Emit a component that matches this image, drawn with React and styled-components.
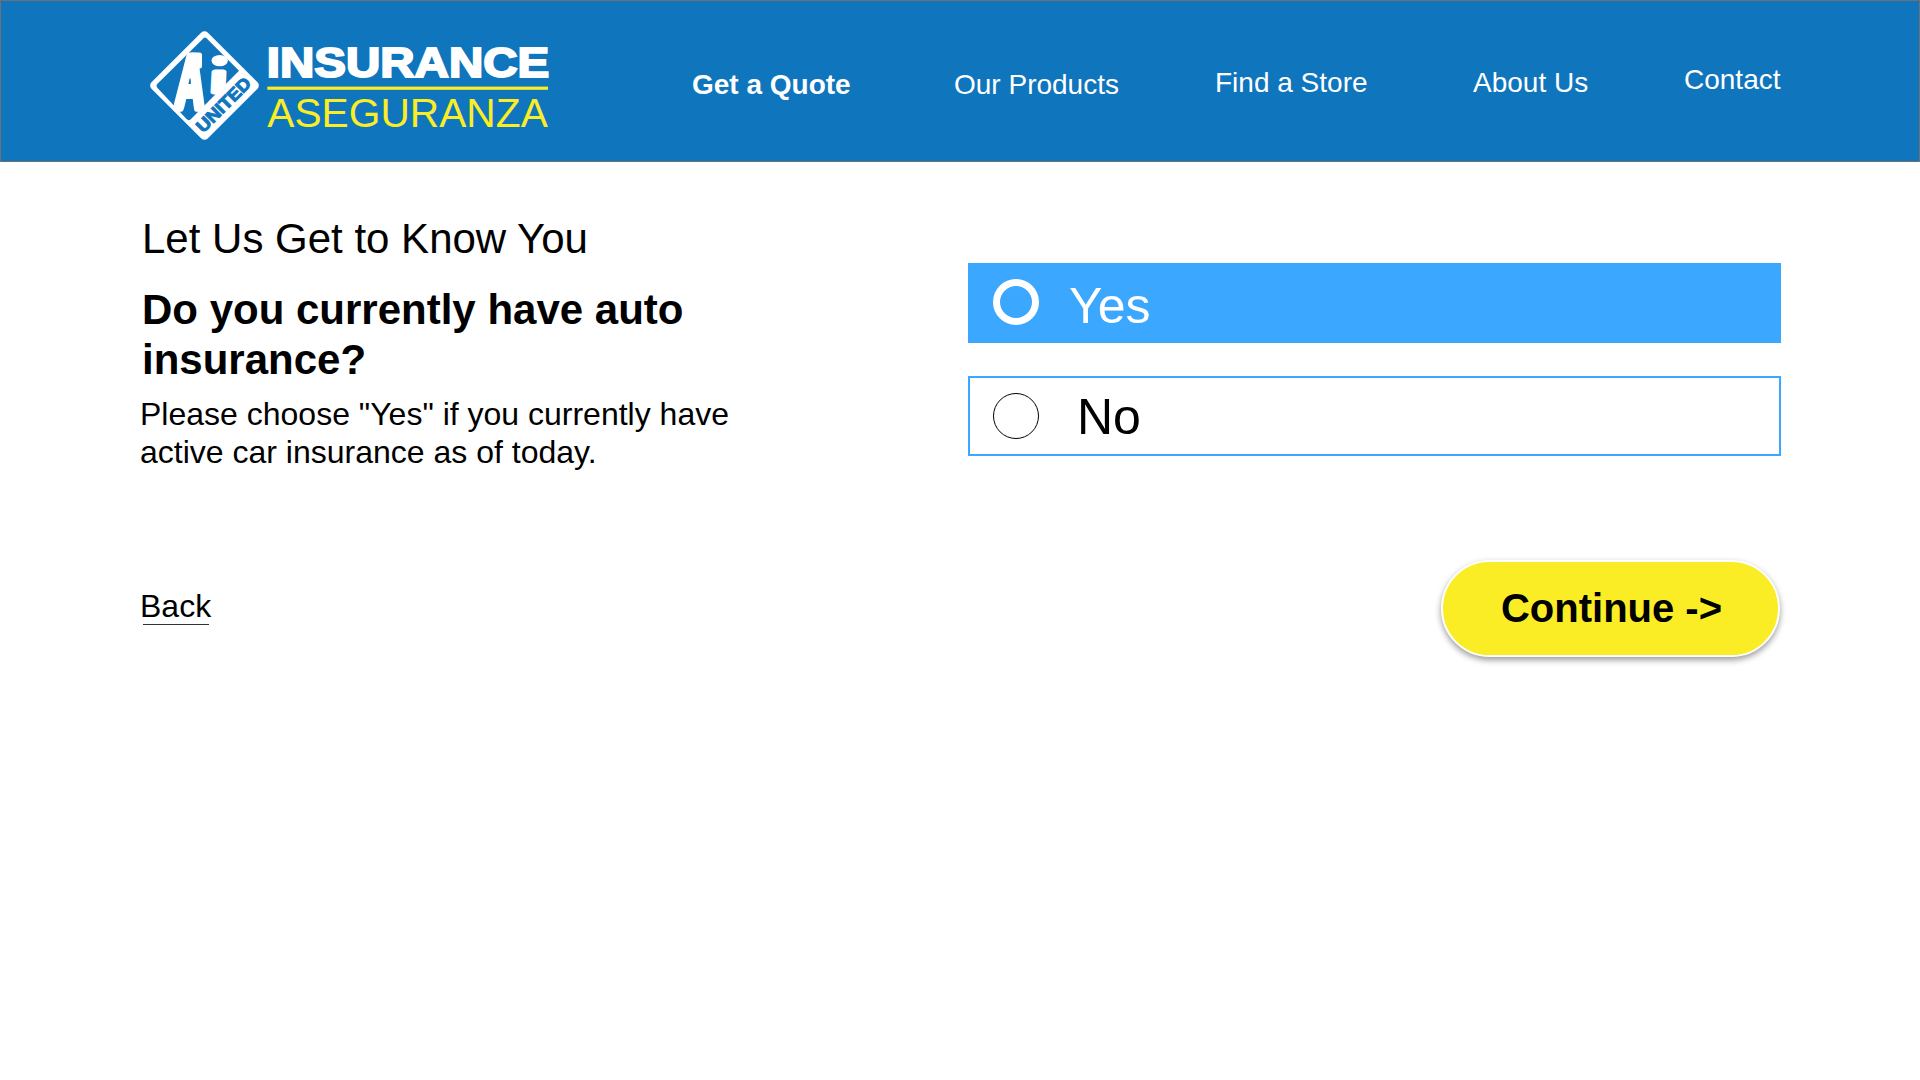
import React, { useState } from "react";
import styled, { createGlobalStyle } from "styled-components";

const GlobalStyle = createGlobalStyle`
  * { box-sizing: border-box; }
  body {
    margin: 0;
    background: #fff;
    color: #000;
    font-family: "Liberation Sans", Arial, Helvetica, sans-serif;
  }
`;

const Page = styled.div`
  width: 1920px;
  min-height: 1080px;
  background: #fff;
`;

const Header = styled.header`
  display: flex;
  align-items: flex-start;
  height: 162px;
  padding: 19px 0 0 139px;
  background: #0f75bd;
  border: 1px solid #707070;
`;

const Logo = styled.svg`
  display: block;
  flex: none;
  width: 420px;
  height: 130px;
`;

const Nav = styled.nav`
  display: grid;
  grid-template-columns: 262px 261px 258px 211px auto;
  align-items: start;
  margin-left: 132px;
  padding-top: 44px;
`;

const NavLink = styled.a`
  margin-top: ${(p) => p.$drop}px;
  color: #fff;
  font-size: 28px;
  line-height: 32px;
  font-weight: ${(p) => (p.$active ? 700 : 400)};
  white-space: nowrap;
  text-decoration: none;
`;

const Main = styled.main`
  display: grid;
  grid-template-columns: 827px 813px;
  padding: 53px 0 0 141px;
`;

const Intro = styled.section`
  display: flex;
  flex-direction: column;
  align-items: flex-start;
`;

const Eyebrow = styled.p`
  margin: 0 0 0 1px;
  font-size: 42px;
  line-height: 48px;
`;

const Question = styled.h1`
  width: 600px;
  margin: 22px 0 0 1px;
  font-size: 42px;
  line-height: 50px;
  font-weight: 700;
`;

const Hint = styled.p`
  width: 620px;
  margin: 10px 0 0 -1px;
  font-size: 32px;
  line-height: 38px;
`;

const BackLink = styled.a`
  margin: 117px 0 0 -1px;
  color: #000;
  font-size: 32px;
  line-height: 37px;
  text-decoration: none;

  &::after {
    content: "";
    display: block;
    width: 66px;
    height: 1px;
    margin: -1px 0 0 3px;
    background: #333;
  }
`;

const Answers = styled.section`
  display: flex;
  flex-direction: column;
  padding-top: 48px;
`;

const Option = styled.button`
  display: flex;
  align-items: flex-start;
  height: 80px;
  margin: 0 0 33px;
  padding: ${(p) => (p.$selected ? "14px" : "15px")} 0 0 23px;
  border: 2px solid #3ba7ff;
  background: ${(p) => (p.$selected ? "#3ba7ff" : "#fff")};
  color: ${(p) => (p.$selected ? "#fff" : "#000")};
  font-family: inherit;
  font-size: 50px;
  line-height: 58px;
  text-align: left;
`;

const Radio = styled.span`
  flex: none;
  width: 46px;
  height: 46px;
  border: ${(p) => (p.$selected ? "7px solid #fff" : "1px solid #000")};
  border-radius: 50%;
`;

const OptionLabel = styled.span`
  margin: ${(p) => (p.$selected ? "-2px 0 0 30px" : "-5px 0 0 38px")};
`;

const Continue = styled.button`
  align-self: flex-end;
  width: 339px;
  height: 97px;
  margin: 71px 1px 0 0;
  padding: 0 0 2px 2px;
  border: 2px solid #fff;
  border-radius: 49px;
  background: #faed26;
  box-shadow: 0 3px 6px rgba(0, 0, 0, 0.4);
  color: #000;
  font-family: inherit;
  font-size: 40px;
  font-weight: 700;
  line-height: 46px;
`;

const navItems = [
  { label: "Get a Quote", drop: 5, active: true },
  { label: "Our Products", drop: 5 },
  { label: "Find a Store", drop: 3 },
  { label: "About Us", drop: 3 },
  { label: "Contact", drop: 0 },
];

function BrandLogo() {
  return (
    <Logo viewBox="0 0 420 130" fontFamily="Liberation Sans, Arial, sans-serif">
      <rect x="24.75" y="25.75" width="79.5" height="79.5" rx="4.5" fill="#fff" transform="rotate(45 64.5 65.5)" />
      <path d="M63.5 18.2 Q65 16.8 66.5 18.2 L99 50.7 L50.5 99.5 Q48.5 101 46.5 99 L17.5 68 Q15.5 65.8 17.5 63.8 Z" fill="#0f75bd" />
      <g fill="#fff" stroke="#fff" strokeLinejoin="round" fontWeight="700">
        <text transform="matrix(.54 0 -.06 1 35 87)" x="0" y="0" fontSize="72" strokeWidth="9.5">A</text>
        <rect x="48.5" y="32.5" width="13.5" height="16" rx="2.5" strokeWidth="0" />
        <text transform="matrix(1.45 0 -.05 1 70.2 72)" x="0" y="0" fontSize="38" strokeWidth="5">ı</text>
        <ellipse cx="79.7" cy="40.6" rx="8.2" ry="5.7" strokeWidth="0" />
      </g>
      <path d="M49.6 58.5 L50.6 58.5 L50.9 64 L48.4 64 Z" fill="#0f75bd" />
      <text transform="translate(63.2 113.5) rotate(-45)" x="0" y="0" fontSize="17.5" fontWeight="700" textLength="69.5" lengthAdjust="spacingAndGlyphs" fill="#0f75bd" stroke="#0f75bd" strokeWidth="1">UNITED</text>
      <text x="126.8" y="56.5" fontSize="42.3" fontWeight="700" textLength="282.4" lengthAdjust="spacingAndGlyphs" fill="#fff" stroke="#fff" strokeWidth="2">INSURANCE</text>
      <rect x="127.3" y="66.6" width="280.7" height="3.2" fill="#faed26" />
      <text x="127.3" y="106.7" fontSize="41.5" textLength="280.5" lengthAdjust="spacingAndGlyphs" fill="#faed26">ASEGURANZA</text>
    </Logo>
  );
}

export default function App() {
  const [answer, setAnswer] = useState("Yes");
  return (
    <Page>
      <GlobalStyle />
      <Header>
        <BrandLogo />
        <Nav>
          {navItems.map((item) => (
            <NavLink key={item.label} $drop={item.drop} $active={item.active}>
              {item.label}
            </NavLink>
          ))}
        </Nav>
      </Header>
      <Main>
        <Intro>
          <Eyebrow>Let Us Get to Know You</Eyebrow>
          <Question>Do you currently have auto insurance?</Question>
          <Hint>Please choose "Yes" if you currently have active car insurance as of today.</Hint>
          <BackLink>Back</BackLink>
        </Intro>
        <Answers>
          {["Yes", "No"].map((label) => (
            <Option key={label} $selected={answer === label} onClick={() => setAnswer(label)}>
              <Radio $selected={answer === label} />
              <OptionLabel $selected={answer === label}>{label}</OptionLabel>
            </Option>
          ))}
          <Continue>Continue -&gt;</Continue>
        </Answers>
      </Main>
    </Page>
  );
}
